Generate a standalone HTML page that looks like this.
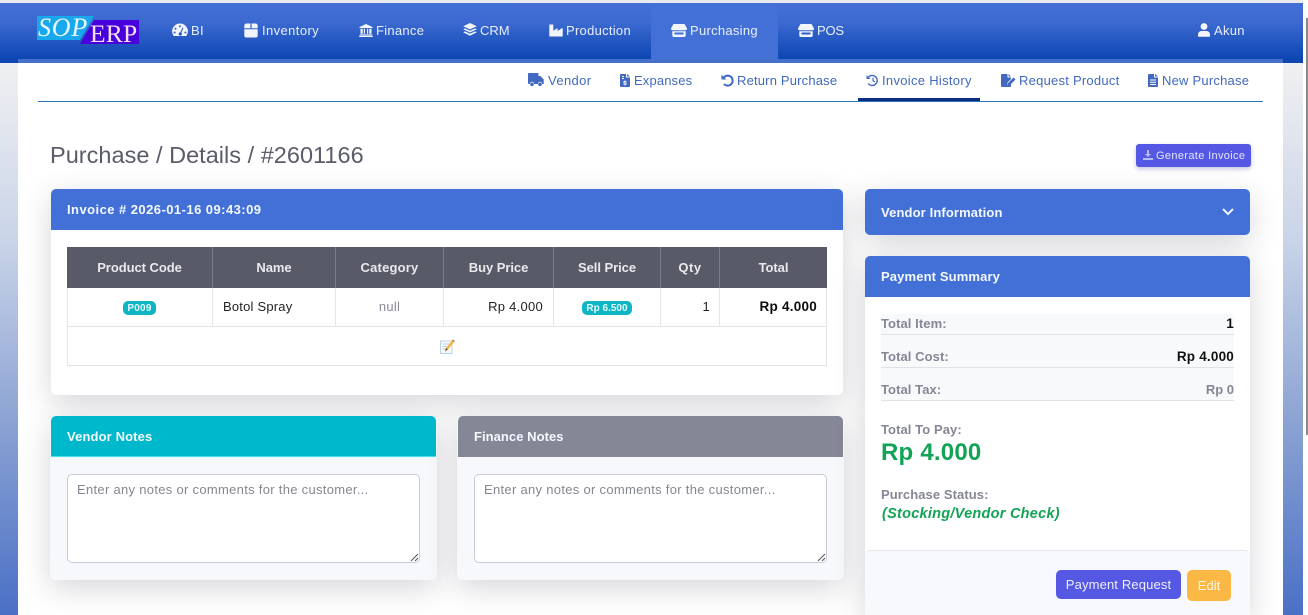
<!DOCTYPE html>
<html><head><meta charset="utf-8"><title>Purchase Details</title>
<style>
*{box-sizing:border-box}
html,body{margin:0;padding:0;width:1308px;height:615px;overflow:hidden;background:#fff}
body{font-family:"Liberation Sans","DejaVu Sans",sans-serif;position:relative}
.a{position:absolute}
.t{position:absolute;white-space:nowrap;line-height:16px}
svg{position:absolute;display:block}
.nav{color:#e8effb;font-size:13px;letter-spacing:.28px;top:23px}
.sub{color:#4169c0;font-size:13px;letter-spacing:.26px;top:73px}
.hd{color:#f4f8ff;font-weight:bold;font-size:13px;letter-spacing:.13px}
.th{color:#e9e9ee;font-weight:bold;font-size:13px;letter-spacing:-.05px;top:260px;text-align:center}
.td{color:#1f2023;font-size:13px;letter-spacing:.26px;top:299px}
.lab{color:#858796;font-weight:bold;font-size:13px;letter-spacing:.08px}
.val{color:#111;font-weight:bold;font-size:13.5px;letter-spacing:.2px;text-align:right;right:74px}
.line{position:absolute;background:#dfe2e6}
.card{position:absolute;border-radius:5px;box-shadow:0 8px 30px rgba(50,50,70,.2)}
.hdr{position:absolute;left:0;top:0;right:0;height:41px;border-radius:5px 5px 0 0;background:#4270d6}
.badge{position:absolute;background:#10b5c4;color:#e4fbfd;font-weight:bold;font-size:10px;line-height:15px;height:14px;border-radius:5px;text-align:center;letter-spacing:.2px}
.area{position:absolute;background:#fff;border:1px solid #c9cbd4;border-radius:5px;height:89px;width:353px;top:474px}
</style></head><body>
<div class="a" style="left:0;top:0;width:1303px;height:615px;background:linear-gradient(180deg,#f4f4f5 0,#f1f1f2 60px,#c9d4e8 240px,#8ca3d3 420px,#4a70c6 615px)"></div>
<div class="a" style="left:1303px;top:0;width:5px;height:615px;background:#fff"></div>
<div class="a" style="left:1306px;top:18px;width:2px;height:417px;background:#8a8a8a"></div>

<div class="a" style="left:18px;top:60px;width:1265px;height:555px;background:#fff;box-shadow:none"></div>
<div class="a" style="left:0;top:0;width:1303px;height:3px;background:#e9e9ef"></div>
<div class="a" style="left:0;top:3px;width:1303px;height:56px;background:linear-gradient(180deg,#4370d7 0,#3b69d0 35%,#0d46b3 100%)"></div>
<div class="a" style="left:18px;top:59px;width:1265px;height:4px;background:#4470c8"></div>
<div class="a" style="left:0;top:59px;width:18px;height:4px;background:#0f47b2"></div>
<div class="a" style="left:1283px;top:59px;width:20px;height:4px;background:#0f47b2"></div>
<div class="a" style="left:651px;top:3px;width:127px;height:56px;background:#4270d6"></div>

<svg style="left:37px;top:16px" width="102" height="29" viewBox="0 0 102 29"><polygon points="0,0 57,0 43,24 0,24" fill="#19a8ee"/><polygon points="57,4 102,4 102,28 43,28" fill="#4700dc"/></svg>
<div class="t" style="left:38px;top:14px;font-family:'Liberation Serif',serif;font-style:italic;font-size:26px;line-height:28px;color:#e9f7ff;letter-spacing:.8px">SOP</div>
<div class="t" style="left:90px;top:20px;font-family:'Liberation Serif',serif;font-size:25.5px;line-height:28px;color:#f7dff7;letter-spacing:.2px">ERP</div>

<svg style="left:172px;top:23px" width="16" height="14" viewBox="0 0 16 14"><path fill="#f2f5fc" fill-rule="evenodd" d="M8 .5A7.800 7.800 0 0 0 1.200 12.200c.2.500.7.800 1.200.800h11.200c.5 0 1-.3 1.200-.8A7.800 7.800 0 0 0 8 .5zM8 2.300a1 1 0 1 1 0 2 1 1 0 0 1 0-2zM3.500 4.800a1 1 0 1 1 0 2 1 1 0 0 1 0-2zM2.600 8.500a1 1 0 1 1 0 2 1 1 0 0 1 0-2zM13.400 8.500a1 1 0 1 1 0 2 1 1 0 0 1 0-2zM10.400 4.500l1 .5-2 4.600a1.700 1.700 0 1 1-1-.4z"/></svg>
<div class="t nav" style="left:191px">BI</div>
<svg style="left:244px;top:23px" width="14" height="15" viewBox="0 0 14 15"><path fill="#f2f5fc" d="M2.500.5h3.900v4.700H.3V2.700A2.200 2.200 0 0 1 2.500.5zM7.600.5h3.900a2.200 2.200 0 0 1 2.200 2.200v2.500H7.600zM.3 6.200h13.400v6.300a2 2 0 0 1-2 2H2.300a2 2 0 0 1-2-2z"/></svg>
<div class="t nav" style="left:262px;letter-spacing:.4px">Inventory</div>
<svg style="left:359px;top:24px" width="14" height="13" viewBox="0 0 14 13"><path fill="#f2f5fc" d="M7 0l6.500 3v1H.5V3zM1.500 4.800h2.200v5H1.500zM4.800 4.800H6v5H4.800zM8 4.800h1.200v5H8zM10.300 4.800h2.200v5h-2.200zM.8 10.400h12.400v1H.8zM.2 11.800h13.600V13H.2z"/></svg>
<div class="t nav" style="left:376px">Finance</div>
<svg style="left:463px;top:23px" width="14" height="14" viewBox="0 0 14 14"><path fill="#f2f5fc" d="M7 0l6.800 3.200L7 6.400.2 3.200zM2 5.400L7 7.700l5-2.300 1.800.9L7 9.500.2 6.300zM2 8.400l5 2.300 5-2.300 1.800.9L7 12.800.2 9.300z"/></svg>
<div class="t nav" style="left:480px;letter-spacing:0">CRM</div>
<svg style="left:549px;top:24px" width="14" height="13" viewBox="0 0 14 13"><path fill="#f2f5fc" d="M.3.500h4v6.200L8.500 4v3l5.200-3.300V12.500H.3z"/></svg>
<div class="t nav" style="left:566px">Production</div>
<svg style="left:671px;top:24px" width="16" height="13" viewBox="0 0 16 13"><path fill="#f2f5fc" d="M2.500 0h11l2.300 4a1.600 1.600 0 0 1-1.300 2.300H1.500A1.600 1.600 0 0 1 .2 4zM1.300 7.300h13.400V11.500c0 .8-.6 1.500-1.400 1.500H2.700c-.8 0-1.400-.7-1.400-1.500zM3.500 8.500v2h9v-2z"/></svg>
<div class="t nav" style="left:690px">Purchasing</div>
<svg style="left:798px;top:24px" width="16" height="13" viewBox="0 0 16 13"><path fill="#f2f5fc" d="M2.500 0h11l2.300 4a1.600 1.600 0 0 1-1.300 2.300H1.500A1.600 1.600 0 0 1 .2 4zM1.300 7.300h13.400V11.500c0 .8-.6 1.500-1.400 1.500H2.700c-.8 0-1.400-.7-1.400-1.500zM3.500 8.500v2h9v-2z"/></svg>
<div class="t nav" style="left:817px;letter-spacing:-.2px">POS</div>
<svg style="left:1198px;top:23px" width="12" height="14" viewBox="0 0 12 14"><circle cx="6" cy="3.500" r="3.400" fill="#f2f5fc"/><path fill="#f2f5fc" d="M3.500 8h5A3.500 3.500 0 0 1 12 11.500V13a.8.8 0 0 1-.8.8H.8A.8.8 0 0 1 0 13v-1.500A3.500 3.500 0 0 1 3.500 8z"/></svg>
<div class="t nav" style="left:1214px">Akun</div>

<svg style="left:528px;top:73px" width="16" height="14" viewBox="0 0 16 14"><path fill="#4169c0" d="M1 0h8.500A1 1 0 0 1 10.500 1v2h2L15.700 6.500v4.500h-1.500a2.200 2.200 0 0 0-4.400 0H6.200a2.200 2.200 0 0 0-4.400 0H1a1 1 0 0 1-1-1V1a1 1 0 0 1 1-1z"/><circle cx="4" cy="11.300" r="1.800" fill="#4169c0"/><circle cx="12" cy="11.300" r="1.800" fill="#4169c0"/></svg>
<div class="t sub" style="left:548px;letter-spacing:.38px">Vendor</div>
<svg style="left:620px;top:74px" width="10" height="13" viewBox="0 0 10 13"><path fill="#4169c0" d="M1 0h5v3.500h4V12a1 1 0 0 1-1 1H1a1 1 0 0 1-1-1V1a1 1 0 0 1 1-1zM7 0l3 2.500H7z"/><path fill="#fff" d="M2 2h2v1H2zM2 4h2v1H2zM4.500 6.500h1v.7h1v.9H4.500v.5h2v2h-1v.7h-1v-.7h-1v-.9h2V9.200h-2v-2h1z"/></svg>
<div class="t sub" style="left:634px;letter-spacing:.14px">Expanses</div>
<svg style="left:721px;top:74px" width="13" height="13" viewBox="0 0 13 13"><path fill="none" stroke="#4169c0" stroke-width="2" d="M3 3.200A5 5 0 1 1 3 10"/><path fill="#4169c0" d="M.5.800L5.500 5.500H.5z"/></svg>
<div class="t sub" style="left:737px;letter-spacing:.18px">Return Purchase</div>
<svg style="left:866px;top:74px" width="13" height="13" viewBox="0 0 13 13"><path fill="none" stroke="#4169c0" stroke-width="1.400" d="M2.600 3A5 5 0 1 1 2.200 9.500"/><path fill="#4169c0" d="M.5 1L4.500 5H.5z"/><path fill="none" stroke="#4169c0" stroke-width="1.200" d="M7 3.700V6.700L9 8"/></svg>
<div class="t sub" style="left:882px;letter-spacing:.3px">Invoice History</div>
<svg style="left:1001px;top:74px" width="15" height="13" viewBox="0 0 15 13"><path fill="#4169c0" d="M1 0h5.500v3.500H10V5L6.500 8.500 6 11.500l3-.5 1-1V12a1 1 0 0 1-1 1H1a1 1 0 0 1-1-1V1a1 1 0 0 1 1-1zM7.500 0L10 2.500H7.500zM12.500 3.500l2 2-6 6-2.300.4.400-2.400z"/></svg>
<div class="t sub" style="left:1019px;letter-spacing:.24px">Request Product</div>
<svg style="left:1148px;top:74px" width="10" height="13" viewBox="0 0 10 13"><path fill="#4169c0" d="M1 0h5v3.500h4V12a1 1 0 0 1-1 1H1a1 1 0 0 1-1-1V1a1 1 0 0 1 1-1zM7 0l3 2.500H7z"/><path fill="#fff" d="M2 5.500h6v1H2zM2 7.800h6v1H2zM2 10h6v1H2z"/></svg>
<div class="t sub" style="left:1162px;letter-spacing:.22px">New Purchase</div>
<div class="a" style="left:38px;top:101px;width:1225px;height:1px;background:#2f74b8"></div>
<div class="a" style="left:858px;top:98px;width:122px;height:3px;background:#0b2e80"></div>

<div class="t" style="left:50px;top:141px;font-size:23.500px;line-height:28px;color:#5a5c69;letter-spacing:.02px">Purchase / Details / #2601166</div>
<div class="a" style="left:1136px;top:144px;width:115px;height:23px;background:#5558e3;border-radius:3px;box-shadow:0 2px 5px rgba(60,60,150,.3)"></div>
<svg style="left:1143px;top:150px" width="10" height="10" viewBox="0 0 10 10"><path fill="#b8bbf5" d="M4 0h2v4h2.200L5 7 1.800 4H4zM0 8h10v2H0z"/></svg>
<div class="t" style="left:1156px;top:148px;color:#e3e4fb;font-size:11px;letter-spacing:.35px">Generate Invoice</div>

<div class="card" style="left:51px;top:189px;width:792px;height:206px;background:#fff"><div class="hdr"></div></div>
<div class="t hd" style="left:67px;top:202px;letter-spacing:.45px">Invoice # 2026-01-16 09:43:09</div>

<div class="a" style="left:67px;top:247px;width:760px;height:41px;background:#595a68"></div>
<div class="a" style="left:67px;top:288px;width:760px;height:78px;border:1px solid #e3e4e8;border-top:0"></div>
<div class="a" style="left:68px;top:326px;width:758px;height:1px;background:#e3e4e8"></div>
<div class="a" style="left:212px;top:247px;width:1px;height:80px;background:linear-gradient(180deg,#7b7c88 0,#7b7c88 41px,#e3e4e8 41px)"></div>
<div class="a" style="left:335px;top:247px;width:1px;height:80px;background:linear-gradient(180deg,#7b7c88 0,#7b7c88 41px,#e3e4e8 41px)"></div>
<div class="a" style="left:443px;top:247px;width:1px;height:80px;background:linear-gradient(180deg,#7b7c88 0,#7b7c88 41px,#e3e4e8 41px)"></div>
<div class="a" style="left:553px;top:247px;width:1px;height:80px;background:linear-gradient(180deg,#7b7c88 0,#7b7c88 41px,#e3e4e8 41px)"></div>
<div class="a" style="left:660px;top:247px;width:1px;height:80px;background:linear-gradient(180deg,#7b7c88 0,#7b7c88 41px,#e3e4e8 41px)"></div>
<div class="a" style="left:719px;top:247px;width:1px;height:80px;background:linear-gradient(180deg,#7b7c88 0,#7b7c88 41px,#e3e4e8 41px)"></div>

<div class="t th" style="left:67px;width:145px">Product Code</div>
<div class="t th" style="left:213px;width:122px">Name</div>
<div class="t th" style="left:336px;width:107px;letter-spacing:.2px">Category</div>
<div class="t th" style="left:444px;width:109px">Buy Price</div>
<div class="t th" style="left:554px;width:106px">Sell Price</div>
<div class="t th" style="left:661px;width:58px;letter-spacing:.5px">Qty</div>
<div class="t th" style="left:720px;width:107px">Total</div>

<div class="badge" style="left:123px;top:301px;width:33px">P009</div>
<div class="t td" style="left:223px;letter-spacing:.2px">Botol Spray</div>
<div class="t td" style="left:336px;width:107px;text-align:center;color:#8b8c96">null</div>
<div class="t td" style="left:444px;width:99px;text-align:right">Rp 4.000</div>
<div class="badge" style="left:582px;top:301px;width:50px;letter-spacing:0">Rp 6.500</div>
<div class="t td" style="left:661px;width:49px;text-align:right">1</div>
<div class="t td" style="left:720px;width:97px;text-align:right;font-weight:bold;color:#0c0c0e;font-size:13.5px;letter-spacing:.24px">Rp 4.000</div>

<svg style="left:440px;top:339px" width="15" height="15" viewBox="0 0 15 15"><rect x=".5" y="2" width="11.500" height="12.500" fill="#f4f8fc" stroke="#bcd3e6"/><path d="M2.500 5h6M2.500 7.500h4M2.500 10h3" stroke="#b9c4d0" stroke-width=".8"/><path d="M5 12.500l1-3.500 6-7.500 2 1.500-6 7.500z" fill="#f3b33c"/><path d="M12 1.500l.8-1 2 1.500-.8 1z" fill="#df5b50"/><path d="M5 12.500l1-3.500 1.800 1.300z" fill="#6b4a2a"/></svg>

<div class="card" style="left:50px;top:416px;width:387px;height:164px;background:#f6f8fc"><div class="hdr" style="background:#00b8cc;left:1px;right:1px;border-bottom:1px solid #43e0ee"></div></div>
<div class="t hd" style="left:67px;top:429px">Vendor Notes</div>
<div class="area" style="left:67px"></div>
<div class="t" style="left:77px;top:482px;color:#858790;font-size:13px;letter-spacing:.3px">Enter any notes or comments for the customer...</div>
<svg style="left:410px;top:553px" width="9" height="9" viewBox="0 0 9 9"><path d="M1 8L8 1M5 8L8 5" stroke="#555" stroke-width="1"/></svg>

<div class="card" style="left:457px;top:416px;width:387px;height:164px;background:#f6f8fc"><div class="hdr" style="background:#858796;left:1px;right:1px"></div></div>
<div class="t hd" style="left:474px;top:429px;letter-spacing:.05px">Finance Notes</div>
<div class="area" style="left:474px"></div>
<div class="t" style="left:484px;top:482px;color:#858790;font-size:13px;letter-spacing:.3px">Enter any notes or comments for the customer...</div>
<svg style="left:817px;top:553px" width="9" height="9" viewBox="0 0 9 9"><path d="M1 8L8 1M5 8L8 5" stroke="#555" stroke-width="1"/></svg>

<div class="card" style="left:865px;top:189px;width:385px;height:46px;background:#4270d6"></div>
<div class="t hd" style="left:881px;top:205px">Vendor Information</div>
<svg style="left:1222px;top:208px" width="12" height="8" viewBox="0 0 12 8"><path d="M1 1l5 5 5-5" fill="none" stroke="#f2f5fc" stroke-width="2"/></svg>

<div class="card" style="left:865px;top:256px;width:385px;height:359px;background:#fff"><div class="hdr"></div></div>
<div class="t hd" style="left:881px;top:269px">Payment Summary</div>

<div class="a" style="left:881px;top:314px;width:353px;height:87px;background:#f8f9fb"></div>
<div class="line" style="left:881px;top:334px;width:353px;height:1px"></div>
<div class="line" style="left:881px;top:367px;width:353px;height:1px"></div>
<div class="line" style="left:881px;top:400px;width:353px;height:1px"></div>
<div class="t lab" style="left:881px;top:316px">Total Item:</div>
<div class="t val" style="top:316px">1</div>
<div class="t lab" style="left:881px;top:349px">Total Cost:</div>
<div class="t val" style="top:349px">Rp 4.000</div>
<div class="t lab" style="left:881px;top:382px">Total Tax:</div>
<div class="t val" style="top:382px;color:#858796;font-size:13px;letter-spacing:0">Rp 0</div>
<div class="t lab" style="left:881px;top:422px">Total To Pay:</div>
<div class="t" style="left:881px;top:438px;line-height:30px;color:#13a356;font-weight:bold;font-size:24px;letter-spacing:.22px">Rp 4.000</div>
<div class="t lab" style="left:881px;top:487px">Purchase Status:</div>
<div class="t" style="left:882px;top:506px;color:#13a356;font-weight:bold;font-style:italic;font-size:14.5px;letter-spacing:.26px">(Stocking/Vendor Check)</div>

<div class="a" style="left:865px;top:550px;width:385px;height:65px;background:#f8f9fc;border-top:1px solid #e6e8ee;border-radius:5px 5px 0 0"></div>
<div class="a" style="left:1056px;top:570px;width:125px;height:29px;background:#5558e3;border-radius:5px"></div>
<div class="t" style="left:1056px;top:577px;width:125px;text-align:center;color:#eeeefd;font-size:13px;letter-spacing:.14px">Payment Request</div>
<div class="a" style="left:1187px;top:570px;width:44px;height:31px;background:#fbb845;border-radius:5px"></div>
<div class="t" style="left:1187px;top:578px;width:44px;text-align:center;color:#fff8ea;font-size:13px">Edit</div>
</body></html>
